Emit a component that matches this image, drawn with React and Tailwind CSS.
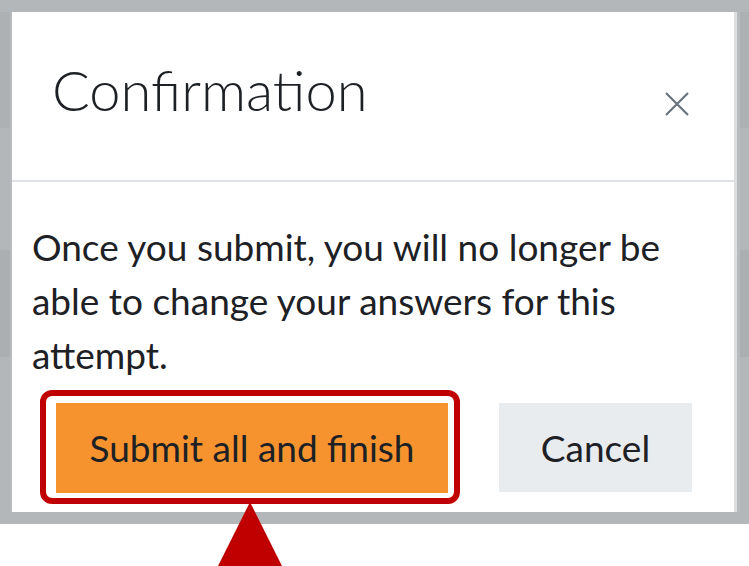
import React from 'react'

const font = { fontFamily: 'Lato, "Open Sans", sans-serif' }

const Gutter = ({ side }) => (
  <div className={`flex flex-col w-[12px] ${side === 'right' ? 'pl-[3px]' : 'pr-[2px]'} bg-[#b8bbbe]`}>
    <div className="h-[116px] bg-[#aeb1b4]" />
    <div className="h-[122px] bg-[#b4b7ba]" />
    <div className="h-[107px] bg-[#acafb2]" />
    <div className="flex-1 bg-[#b4b7ba]" />
  </div>
)

const App = () => {
  return (
    <div className="relative w-[749px] h-[566px] bg-white overflow-hidden" style={font}>
      <div className="flex flex-col h-[524px] bg-[#b4b7ba] pt-[12px] pb-[12px]">
        <div className="flex flex-1">
          <Gutter side="left" />

          <div className="flex flex-col w-[724px] bg-white">
            {/* header */}
            <div className="flex items-start justify-between h-[170px] border-b-2 border-[#dee2e6] pl-[40px] pr-[46px]">
              <h5 className="mt-[38px] text-[56px] leading-[80px] font-light text-[#1d2125]">Confirmation</h5>
              <button className="mt-[79px] mr-[-2px] text-[#6a737b]">
                <svg width="26" height="26" viewBox="0 0 26 26" fill="none" stroke="currentColor" strokeWidth="2.2">
                  <path d="M2 2 L24 24 M24 2 L2 24" />
                </svg>
              </button>
            </div>

            {/* body */}
            <div className="pl-[20px] pr-[20px] pt-[38px]">
              <p className="text-[37px] leading-[54px] text-[#1d2125]">
                Once you submit, you will no longer be able to change your answers for this attempt.
              </p>
            </div>

            {/* footer */}
            <div className="flex items-start mt-[8px] pl-[28px]">
              <div className="rounded-[12px] border-[6px] border-[#c00000] pl-[10px] pr-[6px] pt-[7px] pb-[5px]">
                <button className="w-[392px] h-[90px] bg-[#f6932f] text-[37px] text-[#1d2125]">
                  Submit all and finish
                </button>
              </div>
              <button className="ml-[39px] mt-[13px] w-[193px] h-[89px] bg-[#e9ecef] text-[37px] text-[#1d2125]">
                Cancel
              </button>
            </div>
          </div>

          <div className="w-[3px] bg-[#dcdee0]" />
          <Gutter side="right" />
        </div>
      </div>

      {/* pointer */}
      <svg className="absolute left-[218px] top-[502px]" width="64" height="64" viewBox="0 0 64 64">
        <polygon points="32,0 64,64 0,64" fill="#c00000" />
      </svg>
    </div>
  )
}

export default App
